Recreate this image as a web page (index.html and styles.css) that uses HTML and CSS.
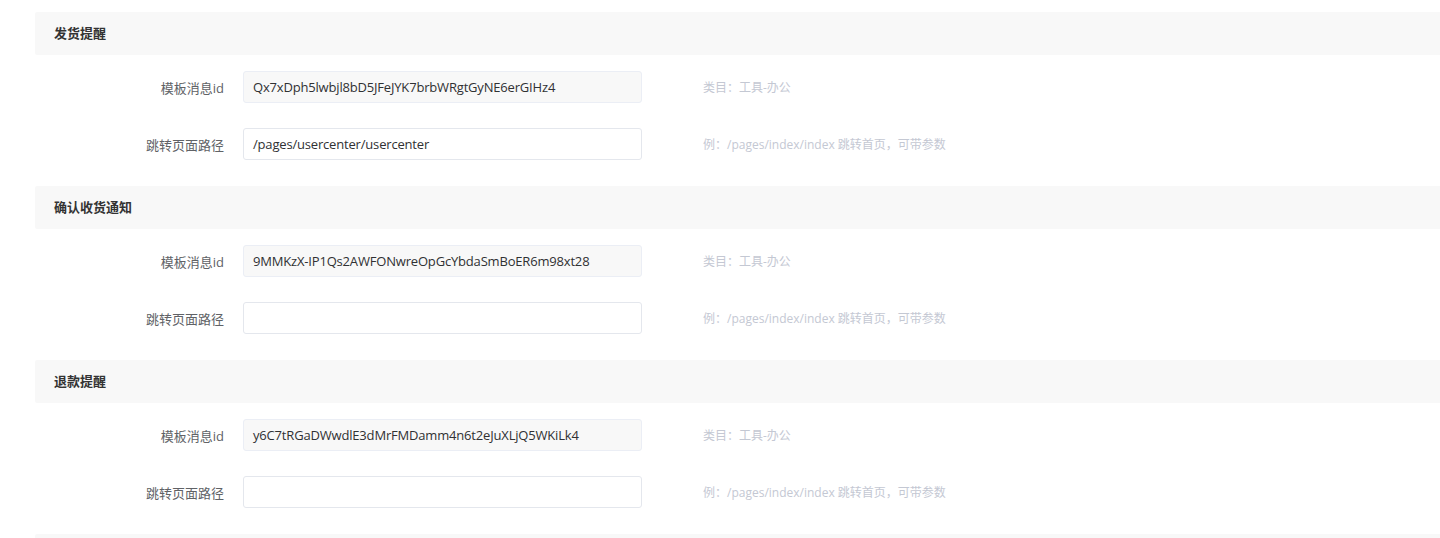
FILE: index.html
```html
<!DOCTYPE html>
<html lang="zh-CN">
<head>
<meta charset="utf-8">
<title>订阅消息</title>
<link rel="stylesheet" href="styles.css">
</head>
<body>
<div class="page">
  <section class="group">
    <div class="group-title">发货提醒</div>
    <div class="item">
      <label class="label">模板消息id</label>
      <div class="input disabled">Qx7xDph5lwbjl8bD5JFeJYK7brbWRgtGyNE6erGIHz4</div>
      <div class="hint">类目：工具-办公</div>
    </div>
    <div class="item">
      <label class="label">跳转页面路径</label>
      <div class="input">/pages/usercenter/usercenter</div>
      <div class="hint">例：/pages/index/index 跳转首页，可带参数</div>
    </div>
  </section>
  <section class="group">
    <div class="group-title">确认收货通知</div>
    <div class="item">
      <label class="label">模板消息id</label>
      <div class="input disabled">9MMKzX-IP1Qs2AWFONwreOpGcYbdaSmBoER6m98xt28</div>
      <div class="hint">类目：工具-办公</div>
    </div>
    <div class="item">
      <label class="label">跳转页面路径</label>
      <div class="input"></div>
      <div class="hint">例：/pages/index/index 跳转首页，可带参数</div>
    </div>
  </section>
  <section class="group">
    <div class="group-title">退款提醒</div>
    <div class="item">
      <label class="label">模板消息id</label>
      <div class="input disabled">y6C7tRGaDWwdlE3dMrFMDamm4n6t2eJuXLjQ5WKiLk4</div>
      <div class="hint">类目：工具-办公</div>
    </div>
    <div class="item">
      <label class="label">跳转页面路径</label>
      <div class="input"></div>
      <div class="hint">例：/pages/index/index 跳转首页，可带参数</div>
    </div>
  </section>
  <section class="group">
    <div class="group-title"></div>
  </section>
</div>
</body>
</html>
```

FILE: styles.css
```css
html, body {
  margin: 0;
  padding: 0;
  background: #fff;
}
body {
  font-family: "Open Sans", "Noto Sans CJK SC", sans-serif;
  font-size: 13px;
  color: #303133;
}
.page {
  padding: 12px 0 0 35px;
}
.group {
  padding-bottom: 1px;
}
.group-title {
  height: 43px;
  line-height: 43px;
  background: #f8f8f8;
  border-radius: 2px 0 0 2px;
  padding-left: 19px;
  font-weight: bold;
  color: #333;
  margin-bottom: 16px;
}
.item {
  display: flex;
  align-items: center;
  height: 32px;
  margin-bottom: 25px;
}
.label {
  width: 208px;
  box-sizing: border-box;
  padding-right: 19px;
  text-align: right;
  color: #606266;
}
.input {
  width: 399px;
  height: 32px;
  box-sizing: border-box;
  border: 1px solid #e4e7ed;
  border-radius: 3px;
  padding: 0 9px;
  line-height: 30px;
  color: #303133;
  background: #fff;
  white-space: nowrap;
  overflow: hidden;
  letter-spacing: -0.18px;
}
.input.disabled {
  background: #f8f8f8;
  border-color: #ebeef5;
}
.hint {
  margin-left: 61px;
  font-size: 12px;
  color: #c4c8d3;
}
```
